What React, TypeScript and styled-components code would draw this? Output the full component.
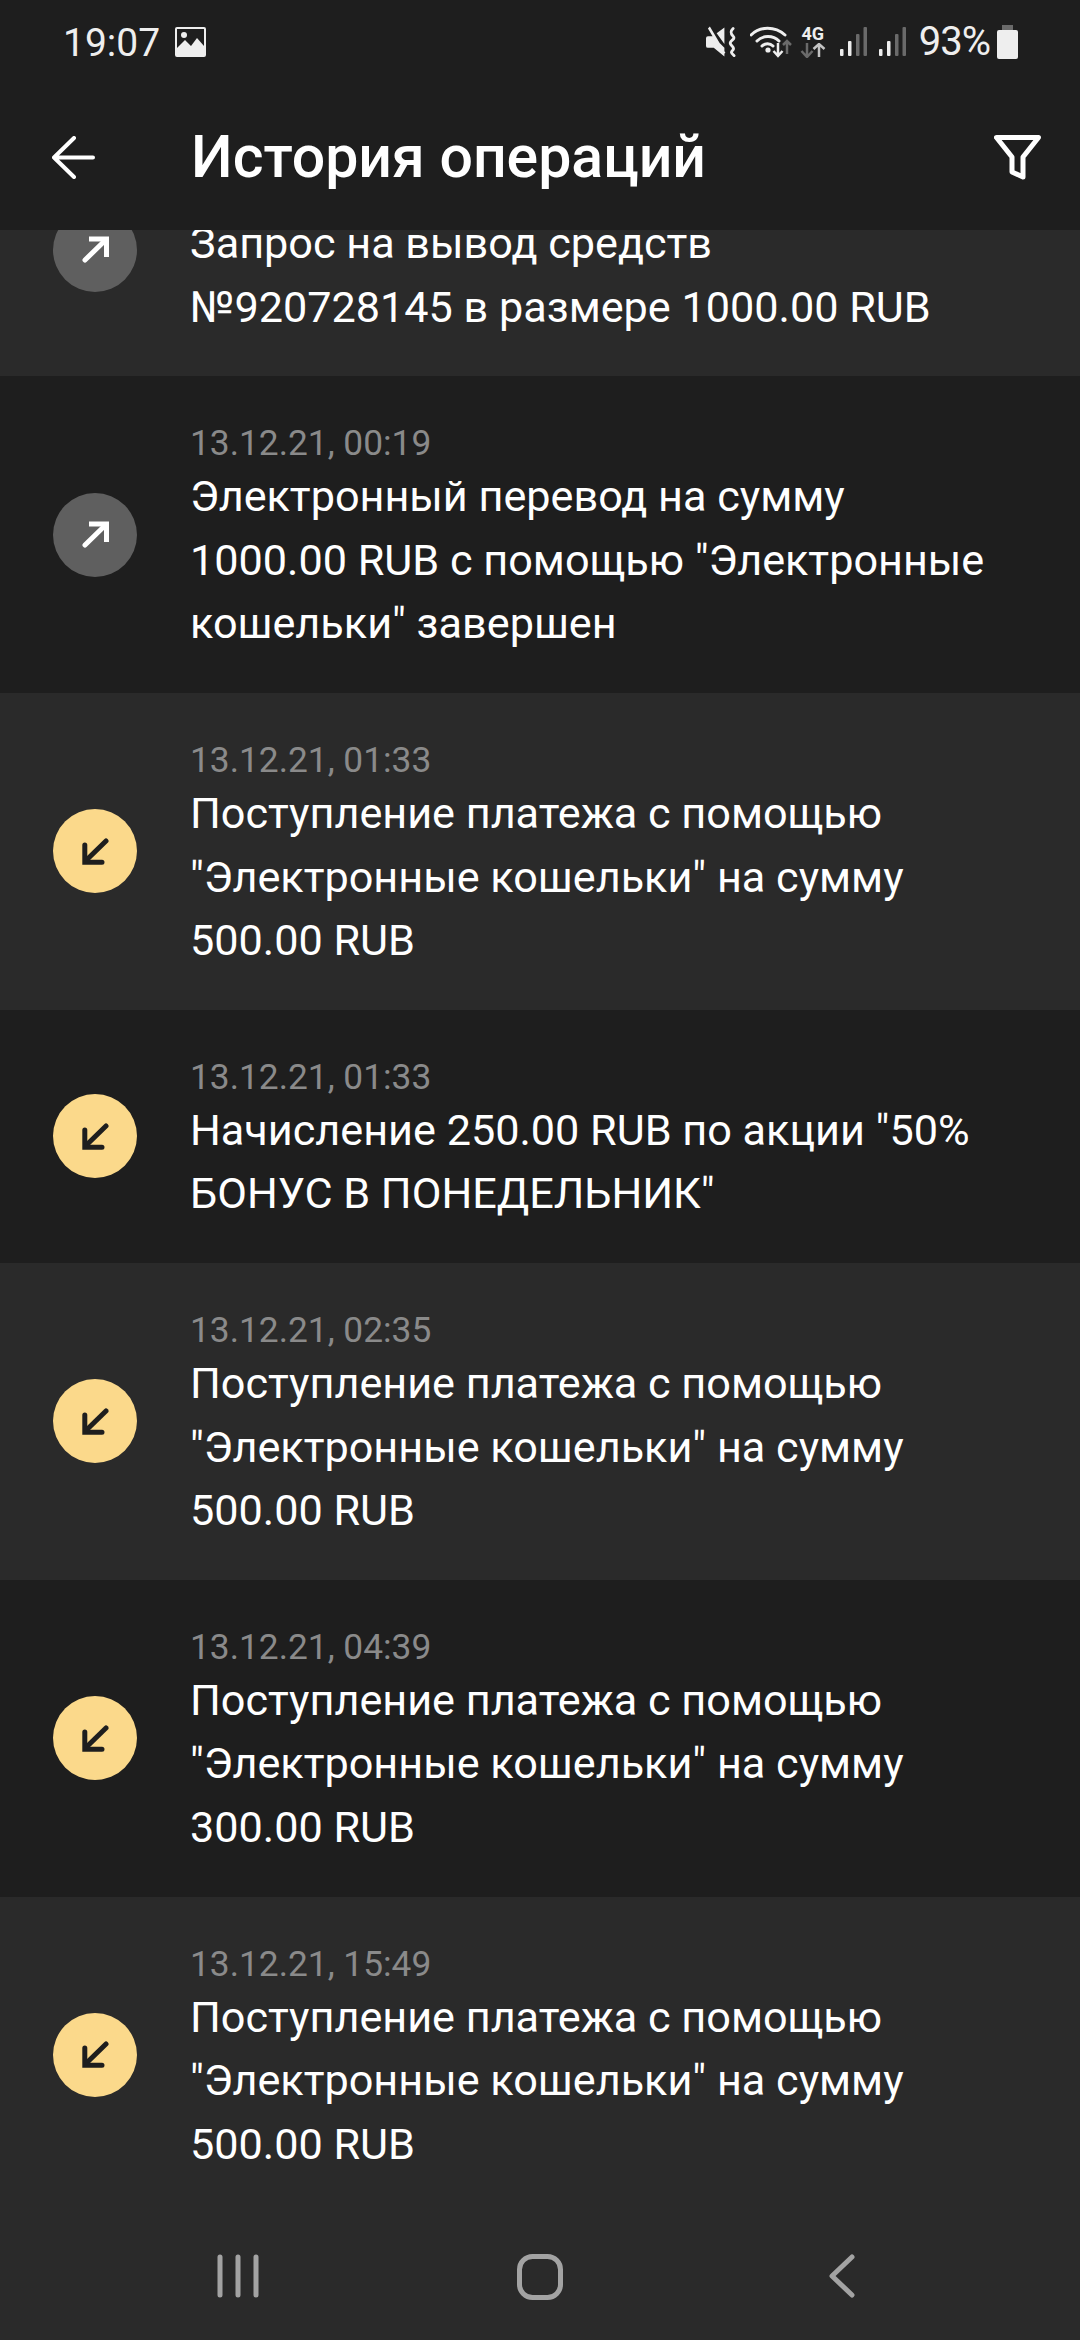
import React from "react";
import styled, { createGlobalStyle } from "styled-components";

const Global = createGlobalStyle`
  html, body { margin: 0; padding: 0; background: #2a2a2a; }
  body { font-family: Roboto, "Noto Sans", sans-serif; }
  * { box-sizing: border-box; }
`;

const Page = styled.div`
  position: relative;
  width: 1080px;
  height: 2340px;
  overflow: hidden;
  display: flex;
  flex-direction: column;
  background: #2a2a2a;
`;

const Top = styled.header`
  position: relative;
  z-index: 2;
  flex: none;
  height: 230px;
  background: #1e1e1e;
  display: flex;
  flex-direction: column;
`;

const StatusBar = styled.div`
  height: 84px;
  padding: 0 62px;
  display: flex;
  align-items: center;
  color: #eeeeee;
  font-size: 39px;
  line-height: 84px;
`;

const StatusTime = styled.span`
  width: 113px;
  padding: 1px 0 0 1px;
`;

const Spacer = styled.div`
  flex: 1;
`;

const StatusIcon = styled.svg`
  flex: none;
  display: block;
`;

const MuteIcon = styled(StatusIcon)`
  margin-right: 1px;
`;

const StatusRight = styled.div`
  display: flex;
  align-items: center;
  gap: 12px;
`;

const NetworkBadge = styled.div`
  width: 26px;
  height: 32px;
  margin: 0 2px 0 -4px;
  display: flex;
  flex-direction: column;
  align-items: center;
`;

const NetworkLabel = styled.span`
  font-size: 18px;
  font-weight: 700;
  line-height: 16px;
  height: 17px;
`;

const Percent = styled.span`
  font-size: 40px;
  margin-left: 1px;
  letter-spacing: -1px;
`;

const Battery = styled(StatusIcon)`
  margin-left: -5px;
`;

const ActionBar = styled.div`
  flex: 1;
  display: flex;
  align-items: center;
  padding: 0 39px 0 52px;
`;

const Title = styled.h1`
  margin: 0 0 0 96px;
  flex: 1;
  font-size: 59px;
  font-weight: 500;
  color: #ffffff;
  line-height: 64px;
`;

const List = styled.main`
  flex: 1;
  overflow: hidden;
  display: flex;
  flex-direction: column;
  margin-top: -107px;
`;

const Row = styled.article<{ $shade: "light" | "dark" }>`
  flex: none;
  display: flex;
  align-items: center;
  padding: 0 60px 0 53px;
  background: ${(p) => (p.$shade === "light" ? "#2a2a2a" : "#1e1e1e")};
`;

const Bubble = styled.div<{ $kind: "out" | "in" }>`
  flex: none;
  width: 84px;
  height: 84px;
  border-radius: 50%;
  display: flex;
  align-items: center;
  justify-content: center;
  background: ${(p) => (p.$kind === "out" ? "#5f5f5f" : "#fbd98b")};
  color: ${(p) => (p.$kind === "out" ? "#ffffff" : "#1e1e1e")};
`;

const Body = styled.div`
  margin-left: 53px;
  flex: 1;
  padding: 45px 0 37px;
`;

const DateText = styled.div`
  font-size: 35.3px;
  line-height: 44px;
  height: 44px;
  color: #8a8a8a;
`;

const Message = styled.div`
  font-size: 43.2px;
  line-height: 63.6px;
  color: #ffffff;
`;

const NavBar = styled.nav`
  position: absolute;
  left: 0;
  right: 0;
  bottom: 0;
  height: 126px;
  background: #2a2a2a;
  display: grid;
  grid-template-columns: repeat(3, 302px);
  justify-content: center;
  padding-top: 40px;
  z-index: 2;
`;

const NavSlot = styled.div`
  display: flex;
  justify-content: center;
`;

const Arrow = ({ dir }: { dir: "out" | "in" }) => (
  <svg width="27" height="27" viewBox="0 0 27 27" fill="none" stroke="currentColor" strokeWidth="5" strokeLinecap="round" strokeLinejoin="miter">
    {dir === "out" ? (
      <>
        <path d="M3 24 L22 5.500" />
        <path d="M7 3 H24.500 V21" strokeLinecap="butt" />
      </>
    ) : (
      <>
        <path d="M24 3 L5 21.500" />
        <path d="M2.800 7 V24.200 H20" />
      </>
    )}
  </svg>
);

type Item = { date: string; lines: string[]; kind: "out" | "in" };

const items: Item[] = [
  { date: "", lines: ["Запрос на вывод средств", "№920728145 в размере 1000.00 RUB"], kind: "out" },
  { date: "13.12.21, 00:19", lines: ["Электронный перевод на сумму", '1000.00 RUB с помощью "Электронные', 'кошельки" завершен'], kind: "out" },
  { date: "13.12.21, 01:33", lines: ["Поступление платежа с помощью", '"Электронные кошельки" на сумму', "500.00 RUB"], kind: "in" },
  { date: "13.12.21, 01:33", lines: ['Начисление 250.00 RUB по акции "50%', 'БОНУС В ПОНЕДЕЛЬНИК"'], kind: "in" },
  { date: "13.12.21, 02:35", lines: ["Поступление платежа с помощью", '"Электронные кошельки" на сумму', "500.00 RUB"], kind: "in" },
  { date: "13.12.21, 04:39", lines: ["Поступление платежа с помощью", '"Электронные кошельки" на сумму', "300.00 RUB"], kind: "in" },
  { date: "13.12.21, 15:49", lines: ["Поступление платежа с помощью", '"Электронные кошельки" на сумму', "500.00 RUB"], kind: "in" },
];

export default function App() {
  return (
    <Page>
      <Global />
      <Top>
        <StatusBar>
          <StatusTime>19:07</StatusTime>
          <StatusIcon width="31" height="30" viewBox="0 0 31 30">
            <path fill="#eee" fillRule="evenodd" d="M2 0H29a2 2 0 0 1 2 2V28a2 2 0 0 1-2 2H2a2 2 0 0 1-2-2V2a2 2 0 0 1 2-2ZM2 21 10 13 16 19 22 11 29 19V2H2Z" />
            <circle cx="9" cy="8" r="3" fill="#eee" />
          </StatusIcon>
          <Spacer />
          <StatusRight>
            <MuteIcon width="31" height="32" viewBox="0 0 32 32">
              <path fill="#eee" d="M2 10H7L19 22V31L8 22H2a2 2 0 0 1-2-2V12a2 2 0 0 1 2-2ZM11 7 19 1V18ZM2 2 4 0 20 27 18 29Z" />
              <path fill="none" stroke="#eee" strokeWidth="3" strokeLinecap="round" strokeLinejoin="round" d="M28 2 C25 5 25 7 28 10 C31 13 25 14 25 17 C25 20 30 21 28 24 C26 26 25 27 29 30" />
            </MuteIcon>
            <StatusIcon width="42" height="32" viewBox="0 0 42 32">
              <g fill="none" stroke="#eee" strokeWidth="3" strokeLinecap="round">
                <path d="M1 9 C10 0 25 0 35 9" />
                <path d="M7 15 C13 9 23 9 29 15" />
                <path d="M12 20 C15 17 20 17 23 20" />
              </g>
              <circle cx="18" cy="24" r="2.600" fill="#eee" />
              <path fill="none" stroke="#eee" strokeWidth="2.500" d="M28 17V30M23.500 25 28 30 32.500 25" />
              <path fill="none" stroke="#6a6a6a" strokeWidth="2.500" d="M37 28V15M33 19 37 15 41 19" />
            </StatusIcon>
            <NetworkBadge>
              <NetworkLabel>4G</NetworkLabel>
              <StatusIcon width="26" height="15" viewBox="0 0 26 15">
                <path fill="none" stroke="#6a6a6a" strokeWidth="2.500" d="M7 0V13M1.500 8 7 14 12.500 8" />
                <path fill="none" stroke="#c4c4c4" strokeWidth="2.500" d="M19 14V1M13.500 6 19 1 24.500 6" />
              </StatusIcon>
            </NetworkBadge>
            {[0, 1].map((k) => (
              <StatusIcon key={k} width="27" height="32" viewBox="0 0 27 32">
                <rect x="0" y="23" width="3.500" height="7" rx="1" fill="#eee" />
                <rect x="8" y="15" width="3.500" height="15" rx="1" fill="#eee" />
                <rect x="16" y="8" width="3.500" height="22" rx="1" fill="#6a6a6a" />
                <rect x="23.500" y="1" width="3.500" height="29" rx="1" fill="#6a6a6a" />
              </StatusIcon>
            ))}
            <Percent>93%</Percent>
            <Battery width="21" height="34" viewBox="0 0 21 34">
              <path fill="#6a6a6a" d="M5 0H16V6H5Z" />
              <rect x="0" y="5" width="21" height="29" rx="2" fill="#eee" />
            </Battery>
          </StatusRight>
        </StatusBar>
        <ActionBar>
          <svg width="43" height="43" viewBox="0 0 43 43" fill="none" stroke="#fff" strokeWidth="4" strokeLinecap="round" strokeLinejoin="round">
            <path d="M2 21.500H41M22 2 2 21.500 22 41" />
          </svg>
          <Title>История операций</Title>
          <svg width="47" height="45" viewBox="0 0 47 45" fill="none" stroke="#fff" strokeWidth="5" strokeLinejoin="round">
            <path d="M2.500 2.500H44.500L29 22V42L18 37V22Z" />
          </svg>
        </ActionBar>
      </Top>
      <List>
        {items.map((it, i) => (
          <Row key={i} $shade={i % 2 === 0 ? "light" : "dark"}>
            <Bubble $kind={it.kind}>
              <Arrow dir={it.kind} />
            </Bubble>
            <Body>
              <DateText>{it.date}</DateText>
              <Message>
                {it.lines.map((l, j) => (
                  <div key={j}>{l}</div>
                ))}
              </Message>
            </Body>
          </Row>
        ))}
      </List>
      <NavBar>
        <NavSlot>
          <svg width="42" height="44" viewBox="0 0 42 44" stroke="#a3a3a3" strokeWidth="5" strokeLinecap="round">
            <path d="M3 3V41M21 3V41M39 3V41" />
          </svg>
        </NavSlot>
        <NavSlot>
          <svg width="46" height="46" viewBox="0 0 46 46" fill="none" stroke="#a3a3a3" strokeWidth="5">
            <rect x="2.500" y="2.500" width="41" height="41" rx="13" />
          </svg>
        </NavSlot>
        <NavSlot>
          <svg width="26" height="44" viewBox="0 0 26 44" fill="none" stroke="#a3a3a3" strokeWidth="5" strokeLinecap="round" strokeLinejoin="round">
            <path d="M23 3 3 22 23 41" />
          </svg>
        </NavSlot>
      </NavBar>
    </Page>
  );
}
